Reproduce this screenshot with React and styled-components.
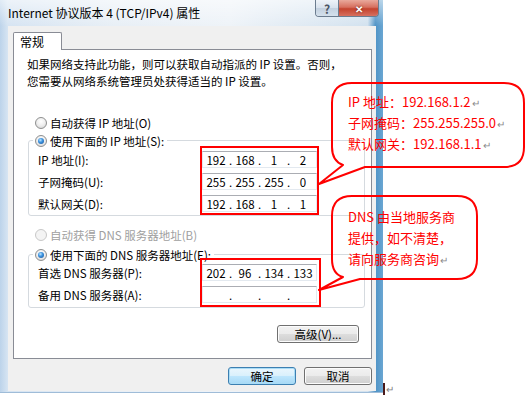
import React from "react"
import styled, { createGlobalStyle } from "styled-components"

const GlobalStyle = createGlobalStyle`
html, body {
  margin: 0;
  padding: 0;
  background: #fff;
}
body {
  font-family: "Noto Sans CJK SC", "Noto Sans", sans-serif;
  color: #000;
}
`

const ipRows = [
    { label: "IP 地址(I):", value: ["192", "168", "1", "2"] },
    { label: "子网掩码(U):", value: ["255", "255", "255", "0"] },
    { label: "默认网关(D):", value: ["192", "168", "1", "1"] },
]

const dnsRows = [
    { label: "首选 DNS 服务器(P):", value: ["202", "96", "134", "133"] },
    { label: "备用 DNS 服务器(A):", value: ["", "", "", ""] },
]

const Radio = ({ checked, disabled, inset = 21, children }) => (
    <RadioRow $disabled={disabled} $inset={inset}>
        <RadioDot $checked={checked} $disabled={disabled} />
        {children}
    </RadioRow>
)

const IpField = ({ value }) => (
    <Field>
        {value.map((v, i) => (
            <React.Fragment key={i}>
                {i > 0 && <Dot>.</Dot>}
                <Octet>{v}</Octet>
            </React.Fragment>
        ))}
    </Field>
)

const AddressGroup = ({ legend, rows, frameWidth, labelTop, frameTop }) => (
    <Group>
        <Legend>
            <Radio checked inset={0}>{legend}</Radio>
        </Legend>
        <Form $top={frameTop}>
            <Labels $top={labelTop}>
                {rows.map((r) => (
                    <Label key={r.label}>{r.label}</Label>
                ))}
            </Labels>
            <RedFrame $width={frameWidth} $top={labelTop}>
                {rows.map((r) => (
                    <IpField key={r.label} value={r.value} />
                ))}
            </RedFrame>
        </Form>
    </Group>
)

const Ret = () => <ReturnMark>↵</ReturnMark>

const App = () => {
    return (
        <Page>
            <GlobalStyle />
            <Window>
                <TitleBar>
                    <Title>Internet 协议版本 4 (TCP/IPv4) 属性</Title>
                    <Caption>
                        <HelpButton>?</HelpButton>
                        <CloseButton>✕</CloseButton>
                    </Caption>
                </TitleBar>
                <Client>
                    <Tabs>
                        <Tab>常规</Tab>
                    </Tabs>
                    <Panel>
                        <Intro>
                            <div>如果网络支持此功能，则可以获取自动指派的 IP 设置。否则，</div>
                            <div>您需要从网络系统管理员处获得适当的 IP 设置。</div>
                        </Intro>
                        <Spacer $h={26} />
                        <Radio>自动获得 IP 地址(O)</Radio>
                        <Spacer $h={10} />
                        <AddressGroup
                            legend="使用下面的 IP 地址(S):"
                            rows={ipRows}
                            frameWidth={119}
                            labelTop={3}
                            frameTop={-2}
                        />
                        <Spacer $h={12} />
                        <Radio disabled>自动获得 DNS 服务器地址(B)</Radio>
                        <Spacer $h={12} />
                        <AddressGroup
                            legend="使用下面的 DNS 服务器地址(E):"
                            rows={dnsRows}
                            frameWidth={121}
                            labelTop={4}
                            frameTop={-4}
                        />
                        <AdvancedRow>
                            <Button $wide>高级(V)...</Button>
                        </AdvancedRow>
                    </Panel>
                    <Footer>
                        <Button $primary>确定</Button>
                        <Button>取消</Button>
                    </Footer>
                </Client>
            </Window>
            <Mark>↵</Mark>

            <Bubbles viewBox="0 0 530 400">
                <path d="M365 167 H504 Q524 167 524 147 V103 Q524 83 504 83 H352 Q332 83 332 103 V147 Q332 161 343 165 L319 184 Z" />
                <path d="M360 279 H457 Q477 279 477 259 V216 Q477 196 457 196 H352 Q332 196 332 216 V259 Q332 274 343 277 L319 290 Z" />
            </Bubbles>
            <Callout $left={348} $top={92} $lh={20}>
                <div>IP 地址：192.168.1.2<Ret /></div>
                <div>子网掩码：255.255.255.0<Ret /></div>
                <div>默认网关：192.168.1.1<Ret /></div>
            </Callout>
            <Callout $left={348} $top={206} $lh={21}>
                <div>DNS 由当地服务商</div>
                <div>提供，如不清楚，</div>
                <div>请向服务商咨询<Ret /></div>
            </Callout>
        </Page>
    )
}
export default App

const Page = styled.div`
position: relative;
width: 530px;
height: 400px;
display: flex;
align-items: flex-start;
overflow: hidden;
`
const Window = styled.div`
width: 383px;
height: 393px;
display: flex;
flex-direction: column;
box-sizing: border-box;
background: linear-gradient(90deg, #bcd3ea 0%, #d6e4f2 2%, #e8eff6 30%, #eef3f8 60%, #d3e2ef 96%, #4f93c6 98%, #6aa6d2 100%);
border-bottom: 1px solid #9fbcd8;
`
const TitleBar = styled.div`
height: 26px;
display: flex;
justify-content: space-between;
align-items: flex-start;
background: linear-gradient(180deg, rgba(255,255,255,0.55), rgba(255,255,255,0));
`
const Title = styled.div`
padding-left: 8px;
line-height: 26px;
font-size: 12px;
color: #000;
white-space: nowrap;
`
const Caption = styled.div`
display: flex;
margin-right: 4px;
border: 1px solid #6b7c8f;
border-top: none;
border-radius: 0 0 4px 4px;
overflow: hidden;
`
const HelpButton = styled.div`
width: 22px;
height: 16px;
display: flex;
align-items: center;
justify-content: center;
font-size: 12px;
font-weight: bold;
color: #4b5563;
background: linear-gradient(180deg, #eef3f8 0%, #d7e1ec 50%, #c2d0df 51%, #d4e0ec 100%);
border-right: 1px solid #6b7c8f;
`
const CloseButton = styled.div`
width: 39px;
height: 16px;
display: flex;
align-items: center;
justify-content: center;
font-size: 10px;
font-weight: bold;
color: #fff;
text-shadow: 0 0 2px #5a1a10;
background: linear-gradient(180deg, #e9a99c 0%, #d7705f 45%, #c4432e 55%, #d7705f 100%);
`
const Client = styled.div`
flex: 1;
margin: 0 7px 1px 8px;
padding: 6px 4px 0 5px;
background: #f0f0f0;
display: flex;
flex-direction: column;
`
const Tabs = styled.div`
display: flex;
height: 17px;
`
const Tab = styled.div`
width: 49px;
height: 18px;
box-sizing: border-box;
padding-left: 6px;
border: 1px solid #898c95;
border-bottom: none;
border-radius: 2px 2px 0 0;
background: #fff;
font-size: 12px;
line-height: 17px;
position: relative;
z-index: 1;
`
const Panel = styled.div`
height: 310px;
box-sizing: border-box;
border: 1px solid #898c95;
background: #fff;
padding: 6px 0 0 0;
display: flex;
flex-direction: column;
`
const Intro = styled.div`
padding-left: 13px;
font-size: 11.5px;
line-height: 17px;
white-space: nowrap;
`
const Spacer = styled.div`
height: ${(p) => p.$h}px;
flex-shrink: 0;
`
const RadioRow = styled.div`
display: flex;
align-items: center;
gap: 3px;
height: 14px;
margin-left: ${(p) => p.$inset}px;
font-size: 11.5px;
white-space: nowrap;
color: ${(p) => (p.$disabled ? "#a0a0a0" : "#000")};
`
const RadioDot = styled.span`
width: 12px;
height: 12px;
box-sizing: border-box;
border-radius: 50%;
border: 1px solid ${(p) => (p.$disabled ? "#c8c8c8" : "#8e8f8f")};
background: ${(p) => (p.$disabled ? "#f4f4f4" : "radial-gradient(circle at 50% 35%, #ffffff 0%, #eeeeee 50%, #cfcfcf 100%)")};
display: flex;
align-items: center;
justify-content: center;
&::after {
    content: "";
    display: ${(p) => (p.$checked ? "block" : "none")};
    width: 6px;
    height: 6px;
    border-radius: 50%;
    background: radial-gradient(circle at 40% 35%, #bfe6ff 0%, #3d94e0 40%, #174f92 100%);
}
`
const Group = styled.div`
margin: 0 6px 0 14px;
border: 1px solid #d5dadf;
border-radius: 3px;
padding: 0 0 0 9px;
display: flex;
flex-direction: column;
`
const Legend = styled.div`
margin: -7px 0 0 -5px;
align-self: flex-start;
background: #fff;
padding: 0 3px 0 2px;
`
const Form = styled.div`
display: flex;
margin-top: ${(p) => p.$top}px;
`
const Labels = styled.div`
width: 162px;
padding-top: ${(p) => p.$top}px;
display: flex;
flex-direction: column;
`
const Label = styled.div`
height: 22px;
line-height: 22px;
font-size: 11.5px;
white-space: nowrap;
`
const RedFrame = styled.div`
width: ${(p) => p.$width}px;
box-sizing: border-box;
border: 2px solid #ff0000;
padding: ${(p) => p.$top}px 0 ${(p) => p.$top - 2}px 0;
display: flex;
flex-direction: column;
gap: 5px;
`
const Field = styled.div`
width: 115px;
height: 17px;
box-sizing: border-box;
border: 1px solid #e3e9ef;
border-top-color: #abadb3;
background: #fff;
display: flex;
align-items: center;
padding-left: 2px;
font-size: 11.5px;
`
const Octet = styled.span`
width: 22px;
text-align: center;
`
const Dot = styled.span`
width: 7px;
text-align: center;
`
const AdvancedRow = styled.div`
display: flex;
justify-content: flex-end;
margin: 17px 12px 0 0;
`
const Button = styled.div`
width: ${(p) => (p.$wide ? "82px" : "68px")};
box-sizing: border-box;
height: 18px;
display: flex;
align-items: center;
justify-content: center;
font-size: 11.5px;
white-space: nowrap;
border: 1px solid ${(p) => (p.$primary ? "#3c7fb1" : "#707070")};
border-radius: 3px;
background: ${(p) => (p.$primary
        ? "linear-gradient(180deg, #eaf6fd 0%, #d9f0fc 50%, #bee6fd 51%, #a7d9f5 100%)"
        : "linear-gradient(180deg, #f2f2f2 0%, #ebebeb 50%, #dddddd 51%, #cfcfcf 100%)")};
box-shadow: ${(p) => (p.$primary ? "0 0 0 1px #a9dcf6 inset" : "0 0 0 1px #fcfcfc inset")};
`
const Footer = styled.div`
display: flex;
justify-content: flex-end;
gap: 8px;
margin-top: 8px;
`
const Mark = styled.div`
align-self: flex-end;
margin-bottom: 5px;
height: 12px;
padding-left: 1px;
border-left: 2px solid #4a1a1a;
font-size: 10px;
line-height: 12px;
color: #808080;
`
const Bubbles = styled.svg`
position: absolute;
left: 0;
top: 0;
width: 530px;
height: 400px;
pointer-events: none;
fill: none;
stroke: #ff0000;
stroke-width: 2;
stroke-linejoin: round;
`
const Callout = styled.div`
position: absolute;
left: ${(p) => p.$left}px;
top: ${(p) => p.$top}px;
color: #ff0000;
font-size: 13px;
line-height: ${(p) => p.$lh}px;
white-space: nowrap;
`
const ReturnMark = styled.span`
color: #8a8a8a;
font-size: 10px;
margin-left: 1px;
`
